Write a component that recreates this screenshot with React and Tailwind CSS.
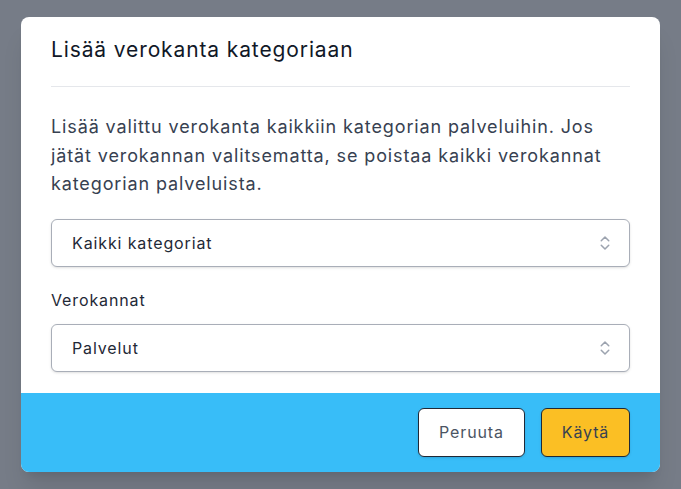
import React from 'react';
import { ChevronsUpDown } from 'lucide-react';

const SelectBox = ({ value }) => (
  <div className="flex h-[48px] w-full items-center justify-between rounded-md border border-[#a9aeb8] bg-white pl-5 pr-[15px] shadow-sm">
    <span className="text-base text-[#1f2937]">{value}</span>
    <ChevronsUpDown className="h-[18px] w-[18px] text-[#9ca3af]" strokeWidth={2} />
  </div>
);

export default function App() {
  return (
    <div className="flex min-h-[489px] w-full justify-center bg-[#767c87] pt-[17px] font-['Inter',sans-serif] tracking-[0.055em]">
      <div className="w-[639px] self-start overflow-hidden rounded-lg bg-white shadow-xl">
        <div className="px-[30px] pt-[19px]">
          <div className="border-b border-[#e5e7eb] pb-[22px]">
            <h2 className="text-[21px] leading-7 text-[#111827]">
              Lisää verokanta kategoriaan
            </h2>
          </div>
          <p className="mt-[26px] text-[18px] leading-[28.5px] text-[#374151]">
            Lisää valittu verokanta kaikkiin kategorian palveluihin. Jos jätät verokannan valitsematta, se poistaa kaikki verokannat kategorian palveluista.
          </p>
          <div className="mt-5">
            <SelectBox value="Kaikki kategoriat" />
          </div>
          <div className="mt-[21px] text-base leading-6 text-[#1f2937]">Verokannat</div>
          <div className="mt-3 mb-[21px]">
            <SelectBox value="Palvelut" />
          </div>
        </div>
        <div className="flex h-[79px] items-center justify-end gap-4 bg-[#38bdf8] px-[30px]">
          <button className="h-[49px] w-[107px] rounded-md border border-[#1f2937] bg-white text-base text-[#4b5563] shadow-sm">
            Peruuta
          </button>
          <button className="h-[49px] w-[89px] rounded-md border border-[#1f2937] bg-[#fbbf24] text-base text-[#374151] shadow-sm">
            Käytä
          </button>
        </div>
      </div>
    </div>
  );
}
